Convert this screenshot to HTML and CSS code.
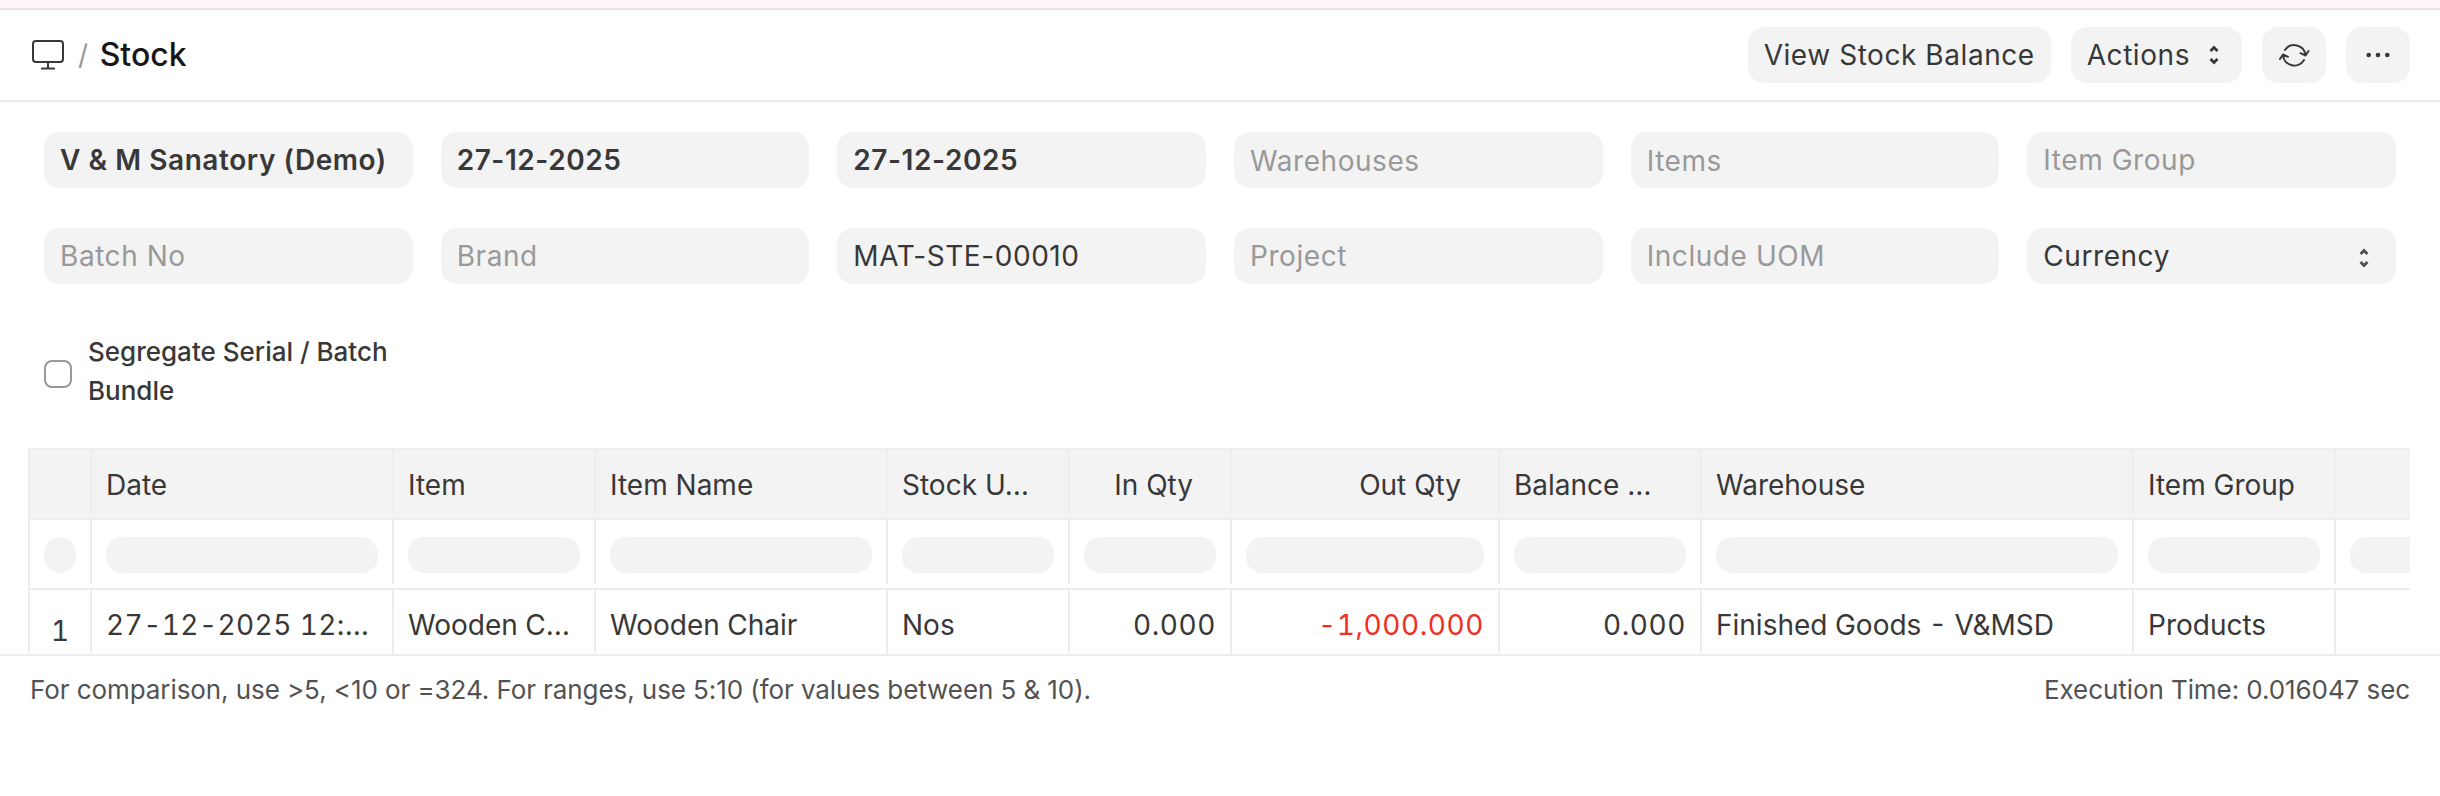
FILE: index.html
```
<!DOCTYPE html>
<html lang="en">
<head>
    <meta charset="UTF-8">
    <meta name="viewport" content="width=device-width, initial-scale=1.0">
    <title>Stock</title>
    <link rel="stylesheet" href="styles.css">
</head>
<body>
    <div class="top-strip"></div>

    <header class="page-head">
        <div class="breadcrumb">
            <svg class="icon-desktop" width="34" height="32" viewBox="0 0 34 32" fill="none" stroke="#383838" stroke-width="2">
                <rect x="2" y="2" width="30" height="21" rx="3"/>
                <path d="M17 23v6M10 29.500h14"/>
            </svg>
            <span class="slash">/</span>
            <h1>Stock</h1>
        </div>
        <div class="page-actions">
            <button class="btn">View Stock Balance</button>
            <button class="btn btn-menu">Actions
                <svg width="12" height="20" viewBox="0 0 12 20" fill="none" stroke="#383838" stroke-width="2.8">
                    <path d="M2.500 6L6 2.500 9.500 6M2.500 14L6 17.500 9.500 14"/>
                </svg>
            </button>
            <button class="btn btn-icon">
                <svg width="32" height="28" viewBox="0 0 32 28" fill="none" stroke="#383838" stroke-width="2" stroke-linecap="round" stroke-linejoin="round">
                    <path d="M7 9A11.300 11.300 0 0 1 27.500 14M22.500 12.200l5 2.300 3-4.500"/>
                    <path d="M26 19A11.300 11.300 0 0 1 5 14M10 15.800L5 13.500l-3 4.500"/>
                </svg>
            </button>
            <button class="btn btn-icon">
                <svg width="26" height="6" viewBox="0 0 26 6" fill="#383838">
                    <circle cx="3.700" cy="3" r="2.300"/>
                    <circle cx="13" cy="3" r="2.300"/>
                    <circle cx="22.300" cy="3" r="2.300"/>
                </svg>
            </button>
        </div>
    </header>

    <section class="filters">
        <div class="field bold">V &amp; M Sanatory (Demo)</div>
        <div class="field bold">27-12-2025</div>
        <div class="field bold">27-12-2025</div>
        <div class="field empty multi">Warehouses</div>
        <div class="field empty multi">Items</div>
        <div class="field empty">Item Group</div>
        <div class="field empty">Batch No</div>
        <div class="field empty">Brand</div>
        <div class="field">MAT-STE-00010</div>
        <div class="field empty">Project</div>
        <div class="field empty">Include UOM</div>
        <div class="field select">Currency
            <svg width="12" height="20" viewBox="0 0 12 20" fill="none" stroke="#525252" stroke-width="2.8">
                <path d="M2.500 6L6 2.500 9.500 6M2.500 14L6 17.500 9.500 14"/>
            </svg>
        </div>
        <label class="check">
            <span class="box"></span>
            <span>Segregate Serial / Batch Bundle</span>
        </label>
    </section>

    <section class="datatable">
        <div class="row head">
            <div class="cell"></div>
            <div class="cell"><span>Date</span></div>
            <div class="cell"><span>Item</span></div>
            <div class="cell"><span>Item Name</span></div>
            <div class="cell"><span>Stock U…</span></div>
            <div class="cell num"><span>In Qty</span></div>
            <div class="cell num"><span>Out Qty</span></div>
            <div class="cell"><span>Balance …</span></div>
            <div class="cell"><span>Warehouse</span></div>
            <div class="cell"><span>Item Group</span></div>
            <div class="cell"></div>
        </div>
        <div class="row search">
            <div class="cell"><i></i></div>
            <div class="cell"><i></i></div>
            <div class="cell"><i></i></div>
            <div class="cell"><i></i></div>
            <div class="cell"><i></i></div>
            <div class="cell"><i></i></div>
            <div class="cell"><i></i></div>
            <div class="cell"><i></i></div>
            <div class="cell"><i></i></div>
            <div class="cell"><i></i></div>
            <div class="cell"><i></i></div>
        </div>
        <div class="row body">
            <div class="cell index"><span>1</span></div>
            <div class="cell date"><span>27-12-2025 12:…</span></div>
            <div class="cell"><span>Wooden C…</span></div>
            <div class="cell"><span>Wooden Chair</span></div>
            <div class="cell"><span>Nos</span></div>
            <div class="cell num"><span>0.000</span></div>
            <div class="cell num negative"><span>-1,000.000</span></div>
            <div class="cell num"><span>0.000</span></div>
            <div class="cell"><span>Finished Goods - V&amp;MSD</span></div>
            <div class="cell"><span>Products</span></div>
            <div class="cell"></div>
        </div>
    </section>

    <footer class="report-footer">
        <span>For comparison, use &gt;5, &lt;10 or =324. For ranges, use 5:10 (for values between 5 &amp; 10).</span>
        <span>Execution Time: 0.016047 sec</span>
    </footer>
</body>
</html>
```
FILE: styles.css
```
* {
    box-sizing: border-box;
}
body {
    margin: 0;
    background-color: #fff;
    color: #383838;
    font-family: Inter, sans-serif;
    font-size: 28px;
    font-weight: 420;
    line-height: 32px;
    letter-spacing: 0.02em;
}
.top-strip {
    height: 10px;
    background-color: #fff7f7;
    border-bottom: 2px solid #ebe1e6;
}

/* header */
.page-head {
    display: flex;
    justify-content: space-between;
    align-items: center;
    height: 92px;
    padding: 0 30px;
    border-bottom: 2px solid #ededed;
}
.breadcrumb {
    display: flex;
    align-items: center;
}
.icon-desktop {
    margin-left: 1px;
}
.slash {
    margin: 0 11px 0 13px;
    color: #999;
}
h1 {
    margin: 0;
    color: #171717;
    font-size: 32px;
    font-weight: 550;
    letter-spacing: 0;
}
.page-actions {
    display: flex;
    gap: 20px;
}
.btn {
    display: flex;
    align-items: center;
    justify-content: center;
    height: 56px;
    padding: 0 16px;
    border: none;
    border-radius: 16px;
    background-color: #f3f3f3;
    color: #383838;
    font: inherit;
    letter-spacing: inherit;
}
.btn-menu {
    gap: 18px;
    padding-right: 22px;
}
.btn-icon {
    width: 64px;
    padding: 0;
}

/* filters */
.filters {
    display: grid;
    grid-template-columns: repeat(6, 1fr);
    column-gap: 28px;
    row-gap: 40px;
    height: 346px;
    padding: 30px 44px 0;
    align-content: start;
}
.field {
    display: flex;
    align-items: center;
    height: 56px;
    padding: 0 16px;
    border-radius: 16px;
    background-color: #f3f3f3;
}
.field.bold {
    font-weight: 600;
}
.field.empty {
    color: #999;
}
.field.multi {
    padding-top: 2px;
}
.field.select {
    justify-content: space-between;
    padding-right: 26px;
}
.field.select svg {
    margin-top: 4px;
}
.check {
    display: flex;
    align-items: center;
    gap: 16px;
    margin-top: 8px;
    font-size: 26px;
    font-weight: 450;
    line-height: 39px;
    letter-spacing: 0;
}
.box {
    flex: none;
    width: 28px;
    height: 28px;
    margin-top: 6px;
    border: 2px solid #999;
    border-radius: 8px;
}

/* table */
.datatable {
    height: 206px;
    margin: 0 30px 0 28px;
    border-left: 2px solid #ededed;
    overflow: hidden;
    letter-spacing: 0;
}
.row {
    display: grid;
    grid-template-columns: 62px 302px 202px 292px 182px 162px 268px 202px 432px 202px 202px;
    height: 70px;
    border-top: 2px solid #ededed;
}
.row.head {
    background-color: #f3f3f3;
}
.cell {
    height: 64px;
    padding: 19px 14px 0;
    border-right: 2px solid #ededed;
}
.cell span {
    display: block;
    white-space: nowrap;
}
.head .cell {
    padding-right: 37px;
}
.search .cell {
    padding-top: 17px;
}
.search i {
    display: block;
    height: 36px;
    border-radius: 16px;
    background-color: #f3f3f3;
}
.body .cell {
    height: 80px;
    font-variant-numeric: tabular-nums;
}
.body .index {
    padding-top: 25px;
    text-align: center;
}
.num {
    text-align: right;
}
.body .num {
    letter-spacing: 0.02em;
}
.body .date {
    letter-spacing: 0.015em;
}
.negative {
    color: #f0301f;
}

/* footer */
.report-footer {
    display: flex;
    justify-content: space-between;
    padding: 18px 30px;
    border-top: 2px solid #ededed;
    color: #525252;
    font-size: 26px;
    letter-spacing: -0.003em;
}
```
